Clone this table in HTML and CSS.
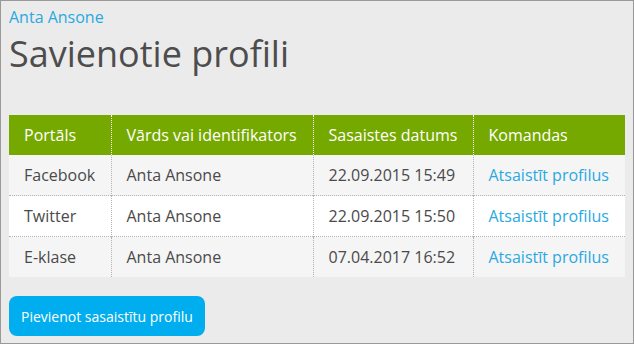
FILE: index.html
```html
<!DOCTYPE html>
<html>
<head>
<meta charset="utf-8">
<link rel="stylesheet" href="styles.css">
</head>
<body>
<div class="page">
  <a class="user" href="#">Anta Ansone</a>
  <h1 class="title">Savienotie profili</h1>
  <table class="profiles">
    <thead>
      <tr>
        <th class="c1">Portāls</th>
        <th class="c2">Vārds vai identifikators</th>
        <th class="c3">Sasaistes datums</th>
        <th class="c4">Komandas</th>
      </tr>
    </thead>
    <tbody>
      <tr>
        <td>Facebook</td>
        <td>Anta Ansone</td>
        <td>22.09.2015 15:49</td>
        <td><a href="#">Atsaistīt profilus</a></td>
      </tr>
      <tr>
        <td>Twitter</td>
        <td>Anta Ansone</td>
        <td>22.09.2015 15:50</td>
        <td><a href="#">Atsaistīt profilus</a></td>
      </tr>
      <tr>
        <td>E-klase</td>
        <td>Anta Ansone</td>
        <td>07.04.2017 16:52</td>
        <td><a href="#">Atsaistīt profilus</a></td>
      </tr>
    </tbody>
  </table>
  <button class="add">Pievienot sasaistītu profilu</button>
</div>
</body>
</html>
```
FILE: styles.css
```css
html, body {
  margin: 0;
  padding: 0;
}
body {
  font-family: "Open Sans", sans-serif;
  color: #4a4a4a;
}
.page {
  width: 634px;
  height: 344px;
  box-sizing: border-box;
  border: 1px solid #999;
  background: #ebebeb;
  padding: 5px 8px 0 8px;
}
.user {
  display: block;
  font-size: 16px;
  line-height: 22px;
  color: #29a9e1;
  text-decoration: none;
}
.title {
  margin: 2px 0 0 0;
  font-size: 36px;
  line-height: 48px;
  font-weight: 400;
  color: #4d4d4d;
}
.profiles {
  margin-top: 37px;
  width: 616px;
  border-collapse: collapse;
  font-size: 16px;
}
.profiles th {
  background: #76a900;
  color: #fff;
  font-weight: 400;
  text-align: left;
  height: 40px;
  padding: 0 0 0 15px;
  border-left: 1px dotted #fff;
  box-sizing: border-box;
}
.profiles th:first-child,
.profiles td:first-child {
  border-left: none;
}
.profiles td {
  height: 40px;
  padding: 0 0 0 15px;
  border-left: 1px dotted #b3b3b3;
  border-top: 1px dotted #b3b3b3;
  color: #4a4a4a;
}
.profiles tbody tr:first-child td {
  border-top: none;
}
.profiles tbody tr:nth-child(odd) td {
  background: #f5f5f5;
}
.profiles tbody tr:nth-child(even) td {
  background: #fff;
}
.profiles td a {
  color: #29a9e1;
  text-decoration: none;
}
.c1 { width: 102px; }
.c2 { width: 202px; }
.c3 { width: 160px; }
.c4 { width: 152px; }
.add {
  margin-top: 19px;
  height: 40px;
  padding: 0 12px;
  border: none;
  border-radius: 8px;
  background: #00aeef;
  color: #fff;
  font-family: "Open Sans", sans-serif;
  font-size: 14px;
}
```
